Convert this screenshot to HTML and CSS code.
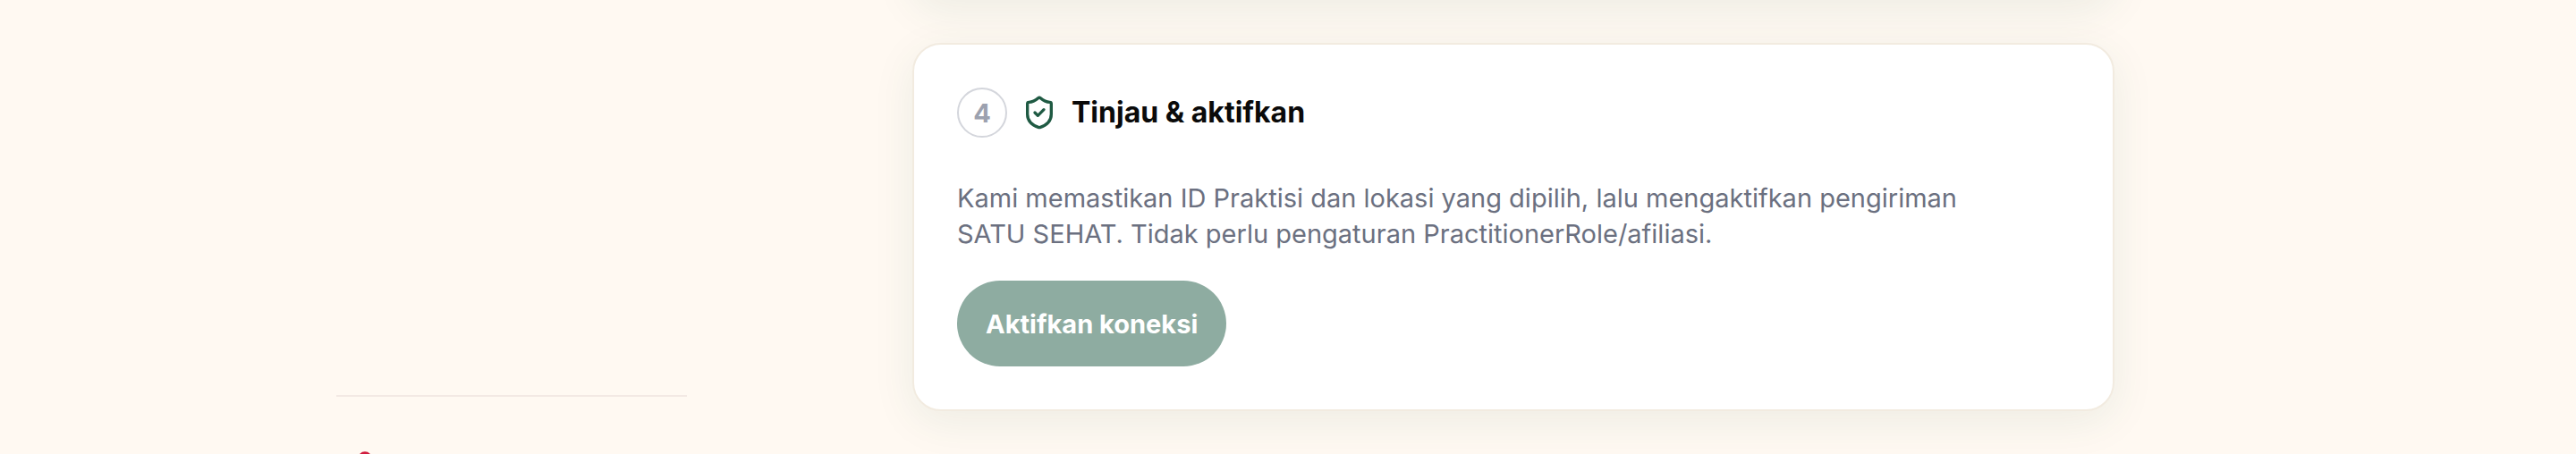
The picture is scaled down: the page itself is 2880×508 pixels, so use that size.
FILE: index.html
```html
<!DOCTYPE html>
<html lang="id">
<head>
<meta charset="utf-8">
<meta name="viewport" content="width=device-width, initial-scale=1">
<title>Tinjau &amp; aktifkan</title>
<link rel="stylesheet" href="styles.css">
</head>
<body>
<div class="shell">
  <aside class="sidebar">
    <div class="sidebar-footer">
      <button class="icon-button" type="button" aria-label="Akun">
        <svg class="icon-account" viewBox="0 0 24 24" aria-hidden="true"><circle cx="12" cy="7" r="5"/><path d="M20 21a8 8 0 0 0-16 0"/></svg>
      </button>
    </div>
  </aside>
  <main class="steps">
    <section class="card card-previous"></section>
    <section class="card">
      <header class="card-header">
        <span class="step-number">4</span>
        <svg class="icon-shield" viewBox="0 0 24 24" aria-hidden="true"><path d="M20 13c0 5-3.500 7.500-7.660 8.950a1 1 0 0 1-.670-.010C7.500 20.500 4 18 4 13V6a1 1 0 0 1 1-1c2 0 4.500-1.200 6.240-2.720a1.170 1.170 0 0 1 1.520 0C14.510 3.810 17 5 19 5a1 1 0 0 1 1 1z"/><path d="m9 12 2 2 4-4"/></svg>
        <h2 class="card-title">Tinjau &amp; aktifkan</h2>
      </header>
      <p class="card-text">Kami memastikan ID Praktisi dan lokasi yang dipilih, lalu mengaktifkan pengiriman<br>SATU SEHAT. Tidak perlu pengaturan PractitionerRole/afiliasi.</p>
      <button class="activate" type="button" disabled>Aktifkan koneksi</button>
    </section>
  </main>
</div>
</body>
</html>
```
FILE: styles.css
```css
* { box-sizing: border-box; }
body {
  margin: 0;
  height: 100vh;
  overflow: hidden;
  background: #fff9f2;
  font-family: Inter, "Open Sans", sans-serif;
  color: #0a0a0a;
}
.shell {
  display: grid;
  grid-template-columns: 392px 1fr;
  gap: 252px;
  height: 100vh;
  overflow: hidden;
  padding: 0 516px 0 376px;
}
.sidebar { padding-top: 442px; }
.sidebar-footer {
  border-top: 2px solid #f3e9e4;
  padding: 60px 16px 0;
}
.icon-button {
  display: block;
  padding: 0;
  border: 0;
  background: none;
}
.icon-account { display: block; width: 32px; height: 32px; }
.icon-account, .icon-shield {
  fill: none;
  stroke-width: 2;
  stroke-linecap: round;
  stroke-linejoin: round;
}
.icon-account { stroke: #d01c3e; }
.icon-shield { width: 40px; height: 40px; stroke: #1f5a43; }
.steps {
  display: flex;
  flex-direction: column;
  gap: 48px;
}
.card {
  padding: 48px;
  border: 2px solid #f2ebe0;
  border-radius: 32px;
  background: #fff;
  box-shadow: 0 12px 48px rgba(20, 90, 60, 0.08);
}
.card-previous { margin-top: -100px; }
.card-header {
  display: flex;
  align-items: center;
  gap: 16px;
  margin-bottom: 48px;
}
.step-number {
  display: flex;
  align-items: center;
  justify-content: center;
  width: 56px;
  height: 56px;
  border: 2px solid #d4d6dc;
  border-radius: 50%;
  color: #9ca1af;
  font-size: 29px;
  font-weight: 700;
}
.card-title {
  margin: 0;
  font-size: 32px;
  line-height: 40px;
  font-weight: 700;
}
.card-text {
  margin: 0 0 32px;
  color: #6b7080;
  font-size: 29px;
  line-height: 40px;
}
.activate {
  display: block;
  height: 96px;
  padding: 0 32px;
  border: 0;
  border-radius: 48px;
  background: #8eaca1;
  color: #fff;
  font-family: inherit;
  font-size: 29px;
  font-weight: 700;
}
```
